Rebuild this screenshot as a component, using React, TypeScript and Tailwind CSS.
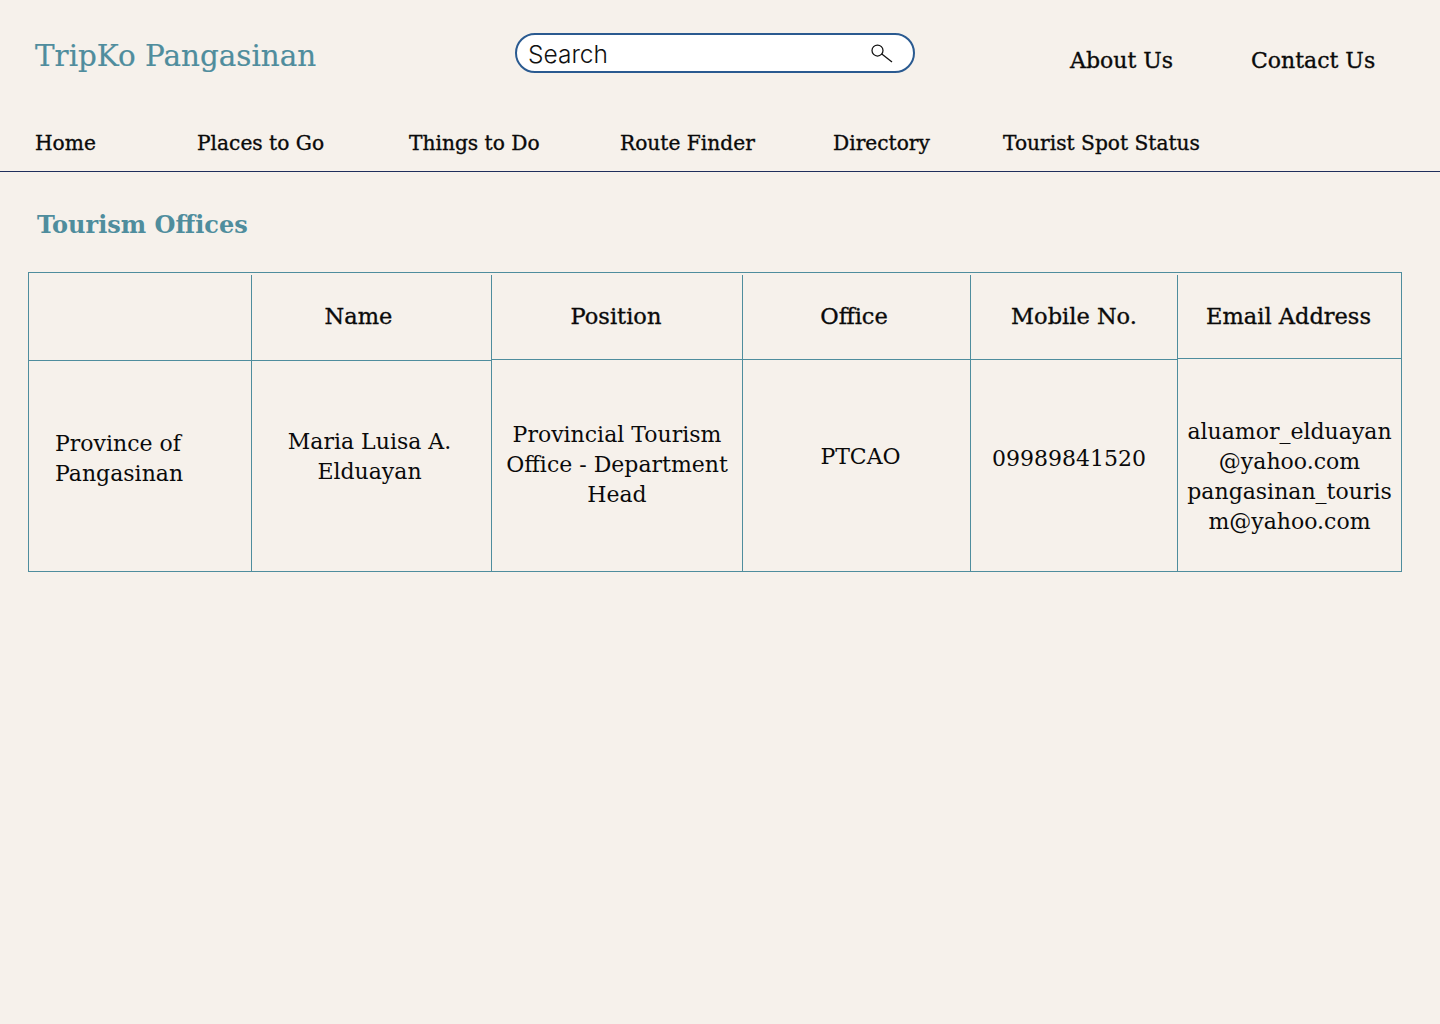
const slab = "font-['DejaVu_Serif','Liberation_Serif',serif]";
const medium = "[-webkit-text-stroke:0.35px]";

const navItems = [
  { label: "Home", className: "w-[162px]" },
  { label: "Places to Go", className: "w-[212px]" },
  { label: "Things to Do", className: "w-[211px]" },
  { label: "Route Finder", className: "w-[213px]" },
  { label: "Directory", className: "w-[170px]" },
  { label: "Tourist Spot Status", className: "" },
];

const columns = [
  {
    width: "w-[223px]",
    headHeight: "h-[88px]",
    head: "",
    headClass: "",
    lines: ["Province of", "Pangasinan"],
    bodyClass: "items-start pl-[26px] pt-[68px]",
  },
  {
    width: "w-[240px]",
    headHeight: "h-[88px]",
    head: "Name",
    headClass: "pr-[26px] pb-[2px]",
    lines: ["Maria Luisa A.", "Elduayan"],
    bodyClass: "items-center pr-[4px] pt-[66px]",
  },
  {
    width: "w-[251px]",
    headHeight: "h-[87px]",
    head: "Position",
    headClass: "pr-[2px]",
    lines: ["Provincial Tourism", "Office - Department", "Head"],
    bodyClass: "items-center pt-[60px]",
  },
  {
    width: "w-[228px]",
    headHeight: "h-[87px]",
    head: "Office",
    headClass: "pr-[5px]",
    lines: ["PTCAO"],
    bodyClass: "items-center pl-[8px] pt-[82px]",
  },
  {
    width: "w-[207px]",
    headHeight: "h-[87px]",
    head: "Mobile No.",
    headClass: "",
    lines: ["09989841520"],
    bodyClass: "items-center pr-[10px] pt-[84px]",
  },
  {
    width: "flex-1",
    headHeight: "h-[86px]",
    head: "Email Address",
    headClass: "pr-[2px]",
    lines: ["aluamor_elduayan", "@yahoo.com", "pangasinan_touris", "m@yahoo.com"],
    bodyClass: "items-center pt-[58px]",
  },
];

function SearchIcon() {
  return (
    <svg width="22" height="20" viewBox="0 0 22 20" fill="none" stroke="#111" strokeWidth="1.25">
      <circle cx="6.5" cy="7.5" r="5.5" />
      <path d="M10.8 11 L21 19" />
    </svg>
  );
}

export default function App() {
  return (
    <div className={`min-h-[1024px] bg-[#f6f1eb] text-[#0a0a0a] ${slab}`}>
      <header className="border-b border-[#1f2f5c]">
        <div className="flex h-[125px] items-start pl-[35px] pt-[33px]">
          <h1 className="w-[480px] pt-[4px] text-[29.4px] leading-[38px] text-[#4f8d9d] [-webkit-text-stroke:0.2px]">
            TripKo Pangasinan
          </h1>
          <div className="flex h-[40px] w-[400px] items-center rounded-[20px] border-2 border-[#2a5a90] bg-white pl-[11px] pr-[20px]">
            <span className="flex-1 pt-[1px] font-['Inter',sans-serif] text-[24.5px] font-light leading-[36px] text-[#111]">
              Search
            </span>
            <SearchIcon />
          </div>
          <nav className={`ml-[155px] flex pt-[12px] text-[22px] leading-[32px] ${medium}`}>
            <a className="w-[181px]">About Us</a>
            <a>Contact Us</a>
          </nav>
        </div>
        <nav className={`flex h-[46px] pl-[35px] pt-[4px] text-[20.2px] leading-[28px] ${medium}`}>
          {navItems.map((item) => (
            <a key={item.label} className={item.className}>
              {item.label}
            </a>
          ))}
        </nav>
      </header>

      <main className="pl-[28px] pr-[38px]">
        <h2 className="pl-[9px] pt-[35px] pb-[30px] text-[24px] font-bold leading-[35px] text-[#4f8d9d]">
          Tourism Offices
        </h2>
        <div className="flex h-[300px] border border-[#4f8d9d]">
          {columns.map((col, i) => (
            <div key={i} className={`flex flex-col ${col.width}`}>
              <div className={`${col.headHeight} border-b border-[#4f8d9d] pt-[2px]`}>
                <div
                  className={`flex h-full items-center justify-center text-[22.5px] ${medium} ${col.headClass} ${
                    i < columns.length - 1 ? "border-r border-[#4f8d9d]" : ""
                  }`}
                >
                  {col.head}
                </div>
              </div>
              <div
                className={`flex flex-1 flex-col text-[22px] leading-[30px] ${col.bodyClass} ${
                  i < columns.length - 1 ? "border-r border-[#4f8d9d]" : ""
                }`}
              >
                <div className={i === 0 ? "text-left" : "text-center"}>
                  {col.lines.map((line) => (
                    <div key={line}>{line}</div>
                  ))}
                </div>
              </div>
            </div>
          ))}
        </div>
      </main>
    </div>
  );
}
